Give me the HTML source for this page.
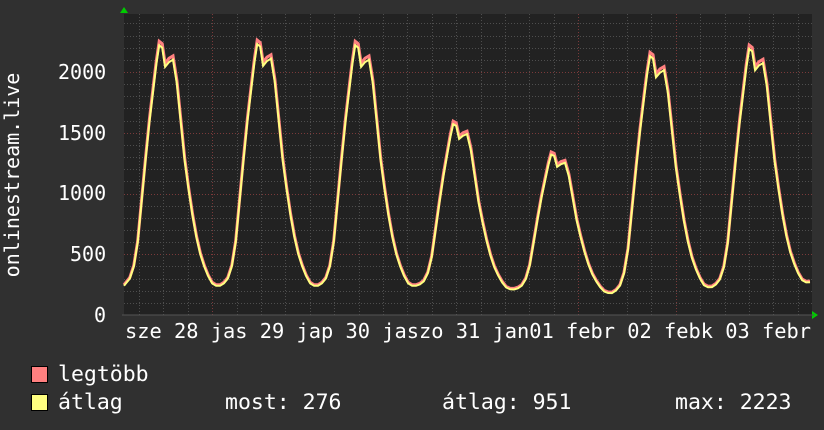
<!DOCTYPE html>
<html><head><meta charset="utf-8"><style>
html,body{margin:0;padding:0;background:#303030;width:824px;height:430px;overflow:hidden}
svg text{font-family:"DejaVu Sans Mono","Liberation Mono",monospace;fill:#fff;font-size:20px}
svg text.lg{font-size:21.5px}
</style></head><body>
<svg id="g" width="824" height="430" xmlns="http://www.w3.org/2000/svg">
<rect x="0" y="0" width="824" height="430" fill="#303030"/>
<rect x="124" y="14" width="688" height="301" fill="#222"/>
<g id="grid"></g>
<path id="mx" fill="none" stroke="#ff8080" stroke-width="3"/>
<path id="av" fill="none" stroke="#ffff80" stroke-width="2"/>
<polygon points="120,13 124,7 128,13" fill="#0c0"/>
<polygon points="812,311 818,315 812,319" fill="#0c0"/>
<line x1="122" y1="315" x2="814" y2="315" fill="none" stroke="#555" stroke-width="1"/>
<text x="58" y="79">2000</text>
<text x="58" y="140">1500</text>
<text x="58" y="200">1000</text>
<text x="70" y="261">500</text>
<text x="94" y="322">0</text>
<text transform="translate(19,175) rotate(-90)" text-anchor="middle">onlinestream.live</text>
<text x="125" y="338" textLength="686" lengthAdjust="spacingAndGlyphs">sze 28 jas 29 jap 30 jaszo 31 jan01 febr 02 febk 03 febr</text>
<rect x="31.5" y="366.5" width="16" height="16" fill="#ff8080" stroke="#000"/>
<rect x="31.5" y="394.5" width="16" height="16" fill="#ffff80" stroke="#000"/>
<text class="lg" x="58" y="381">legtöbb</text>
<text class="lg" x="58" y="409">átlag</text>
<text class="lg" x="225" y="409">most: 276</text>
<text class="lg" x="442" y="409">átlag: 951</text>
<text class="lg" x="675" y="409">max: 2223</text>
</svg>
<script>
var ns="http://www.w3.org/2000/svg",g=document.getElementById("grid");
function ln(x1,y1,x2,y2,c){var l=document.createElementNS(ns,"line");l.setAttribute("x1",x1);l.setAttribute("y1",y1);l.setAttribute("x2",x2);l.setAttribute("y2",y2);l.setAttribute("stroke",c);l.setAttribute("stroke-dasharray","1,2");g.appendChild(l);}
function Y(v){return 315-v*0.1215;}
for(var v=100;v<=2400;v+=100){var y=Math.round(Y(v))+0.5;ln(124,y,812,y,v%500==0?"#7a3a3a":"#4e4e4e");}
for(var x=139;x<812;x+=24.4){var xx=Math.round(x)+0.5;var maj=[212,304,396,488,580,672,764].some(function(m){return Math.abs(m-x)<5});ln(xx,14,xx,315,maj?"#7a3a3a":"#4e4e4e");}
var T=[[0,0],[.04,.01],[.08,.03],[.12,.08],[.16,.18],[.2,.35],[.24,.52],[.28,.68],[.32,.82],[.35,.92],[.38,1],[.41,.99],[.44,.91],[.48,.93],[.52,.94],[.56,.84],[.6,.68],[.64,.52],[.68,.4],[.72,.29],[.76,.2],[.8,.13],[.84,.08],[.88,.04],[.92,.01],[.96,0],[1,0]];
var mins=[122,220,318,416,514,612,712,810],mv=[240,240,240,240,210,180,230,270],pk=[2220,2230,2220,1570,1320,2130,2190];
var a="",b="";
for(var i=0;i<7;i++){for(var j=(i?1:0);j<T.length;j++){var t=T[j][0],f=T[j][1];var x=mins[i]+t*(mins[i+1]-mins[i]);var base=mv[i]+(mv[i+1]-mv[i])*t;var v=base+f*(pk[i]-base);if(x<124)x=124;var c=(a?"L":"M");a+=c+x.toFixed(1)+","+Y(v).toFixed(1);b+=c+(x).toFixed(1)+","+Y(v*1.012+6).toFixed(1);}}
document.getElementById("av").setAttribute("d",a);document.getElementById("mx").setAttribute("d",b);
</script>
</body></html>
